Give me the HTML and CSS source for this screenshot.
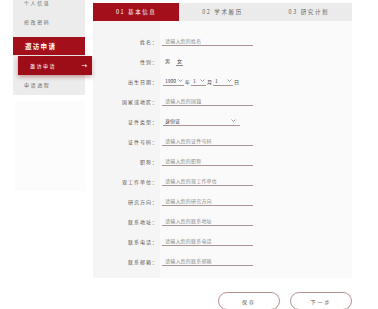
FILE: index.html
```html
<!DOCTYPE html>
<html lang="zh-CN">
  <head>
    <meta charset="UTF-8" />
    <meta name="viewport" content="width=device-width, initial-scale=1.0" />
    <title>邀访申请</title>
    <link rel="stylesheet" href="styles.css">
  </head>
  <body>
    <div class="page">
      <!-- left menu -->
      <div class="sidebar">
        <div class="side-menu">
          <div class="side-item">个人信息</div>
          <div class="side-item">修改密码</div>
          <div class="side-head">邀访申请</div>
          <div class="side-sub">
            <span>邀访申请</span>
            <span class="arrow">→</span>
          </div>
          <div class="side-item">申请进程</div>
        </div>
        <div class="side-blank"></div>
      </div>

      <div class="main">
        <div class="tabs">
          <div class="tab active">01 基本信息</div>
          <div class="tab">02 学术履历</div>
          <div class="tab">03 研究计划</div>
        </div>

        <div class="form">
          <div class="row">
            <label>姓名：</label>
            <div class="field"><input type="text" placeholder="请输入您的姓名" /></div>
          </div>
          <div class="row">
            <label>性别：</label>
            <div class="field sex">
              <span>男</span>
              <span class="picked">女</span>
            </div>
          </div>
          <div class="row">
            <label>出生日期：</label>
            <div class="field date">
              <div class="sel year">1900<svg width="5" height="3" viewBox="0 0 5 3"><path d="M0.5 0.5 L2.5 2.5 L4.5 0.5" fill="none" stroke="#777" stroke-width="0.7"/></svg></div>
              <span class="unit">年</span>
              <div class="sel month">1<svg width="5" height="3" viewBox="0 0 5 3"><path d="M0.5 0.5 L2.5 2.5 L4.5 0.5" fill="none" stroke="#777" stroke-width="0.7"/></svg></div>
              <span class="unit">月</span>
              <div class="sel day">1<svg width="5" height="3" viewBox="0 0 5 3"><path d="M0.5 0.5 L2.5 2.5 L4.5 0.5" fill="none" stroke="#777" stroke-width="0.7"/></svg></div>
              <span class="unit">日</span>
            </div>
          </div>
          <div class="row">
            <label>国家或地区：</label>
            <div class="field"><input type="text" placeholder="请输入您的国籍" /></div>
          </div>
          <div class="row">
            <label>证件类型：</label>
            <div class="field">
              <div class="sel idtype">身份证<svg width="5" height="3" viewBox="0 0 5 3"><path d="M0.5 0.5 L2.5 2.5 L4.5 0.5" fill="none" stroke="#777" stroke-width="0.7"/></svg></div>
            </div>
          </div>
          <div class="row">
            <label>证件号码：</label>
            <div class="field"><input type="text" placeholder="请输入您的证件号码" /></div>
          </div>
          <div class="row">
            <label>职称：</label>
            <div class="field"><input type="text" placeholder="请输入您的职称" /></div>
          </div>
          <div class="row">
            <label>现工作单位：</label>
            <div class="field"><input type="text" placeholder="请输入您的现工作单位" /></div>
          </div>
          <div class="row">
            <label>研究方向：</label>
            <div class="field"><input type="text" placeholder="请输入您的研究方向" /></div>
          </div>
          <div class="row">
            <label>联系地址：</label>
            <div class="field"><input type="text" placeholder="请输入您的联系地址" /></div>
          </div>
          <div class="row">
            <label>联系电话：</label>
            <div class="field"><input type="text" placeholder="请输入您的联系电话" /></div>
          </div>
          <div class="row">
            <label>联系邮箱：</label>
            <div class="field"><input type="text" placeholder="请输入您的联系邮箱" /></div>
          </div>
        </div>

        <div class="actions">
          <button class="btn">保存</button>
          <button class="btn">下一步</button>
        </div>
      </div>
    </div>
  </body>
</html>
```

FILE: styles.css
```css
body {
  margin: 0;
  padding: 0;
  background-color: #fff;
  font-family: "Noto Sans CJK SC", "Noto Sans", sans-serif;
  color: #555;
  overflow: hidden;
}

.page {
  display: flex;
  align-items: flex-start;
}

/* sidebar */
.sidebar {
  width: 72px;
  margin-left: 13px;
  margin-top: -7px;
}

.side-menu {
  background-color: #ececec;
  padding-bottom: 1px;
}

.side-item {
  height: 19px;
  line-height: 19px;
  padding-left: 11px;
  font-size: 5px;
  letter-spacing: 1.6px;
  color: #666;
}

.side-item:nth-child(2) {
  margin-bottom: 6px;
}

.side-head {
  height: 18px;
  line-height: 18px;
  padding-left: 12px;
  background-color: #a3101c;
  color: #fff;
  font-size: 6.5px;
  font-weight: bold;
  letter-spacing: 1.3px;
}

.side-sub {
  display: flex;
  justify-content: space-between;
  align-items: center;
  height: 19px;
  margin: 1px -7px 0 5px;
  padding: 0 5px 0 12px;
  background-color: #9d0d18;
  color: #fff;
  font-size: 5px;
  letter-spacing: 1.5px;
  box-shadow: 0 2px 4px rgba(120, 0, 0, 0.35);
  position: relative;
}

.side-sub .arrow {
  font-size: 7px;
  letter-spacing: 0;
  font-family: "DejaVu Sans", sans-serif;
}

.side-blank {
  height: 90px;
  margin: 6px 0 0 2px;
  background-color: #fcfcfc;
}

/* main column */
.main {
  width: 259px;
  margin-left: 8px;
  margin-top: 3px;
}

.tabs {
  display: flex;
  background-color: #ebebeb;
}

.tab {
  flex: 1;
  height: 18px;
  line-height: 18px;
  text-align: center;
  font-size: 5.5px;
  letter-spacing: 1.6px;
  color: #666;
}

.tab.active {
  background-color: #a3101c;
  color: #fff;
}

.form {
  background: linear-gradient(to right, #f5f5f6 67px, #fafafb 67px);
  padding: 10px 0 7px;
}

.row {
  display: grid;
  grid-template-columns: 67px 1fr;
  align-items: center;
  height: 20px;
}

.row label {
  text-align: right;
  padding-right: 2px;
  font-size: 5px;
  letter-spacing: 1px;
  color: #555;
}

.field {
  display: flex;
  align-items: center;
  padding-left: 2px;
  font-size: 5px;
  color: #444;
}

.field input {
  width: 88px;
  height: 8px;
  padding: 0 0 0 3px;
  border: none;
  border-bottom: 1px solid #a89494;
  background: transparent;
  font-family: inherit;
  font-size: 5px;
  outline: none;
}

.field input::placeholder {
  color: #8a8a8a;
  letter-spacing: 0.2px;
}

.sex span {
  margin-left: 3px;
  margin-right: 3px;
  padding-bottom: 1px;
}

.sex .picked {
  border-bottom: 1px solid #888;
  padding: 0 1px 1px;
}

.sel {
  display: flex;
  justify-content: space-between;
  align-items: center;
  box-sizing: border-box;
  height: 9px;
  padding: 0 1px 0 2px;
  border-bottom: 1px solid #a89494;
}

.sel svg {
  display: block;
}

.year {
  width: 21px;
  margin-left: 1px;
}

.month {
  width: 15px;
  margin-left: 1px;
}

.day {
  width: 20px;
  margin-left: 1px;
}

.unit {
  margin-left: 1px;
}

.idtype {
  width: 77px;
  margin-left: 1px;
  padding-right: 4px;
}

/* bottom buttons */
.actions {
  display: flex;
  justify-content: flex-end;
  gap: 10px;
  margin-top: 14px;
}

.btn {
  width: 62px;
  height: 18px;
  border: 1px solid #b39292;
  border-radius: 9px;
  background-color: #fff;
  font-family: inherit;
  font-size: 5px;
  letter-spacing: 2px;
  color: #555;
  padding: 0;
}
```
